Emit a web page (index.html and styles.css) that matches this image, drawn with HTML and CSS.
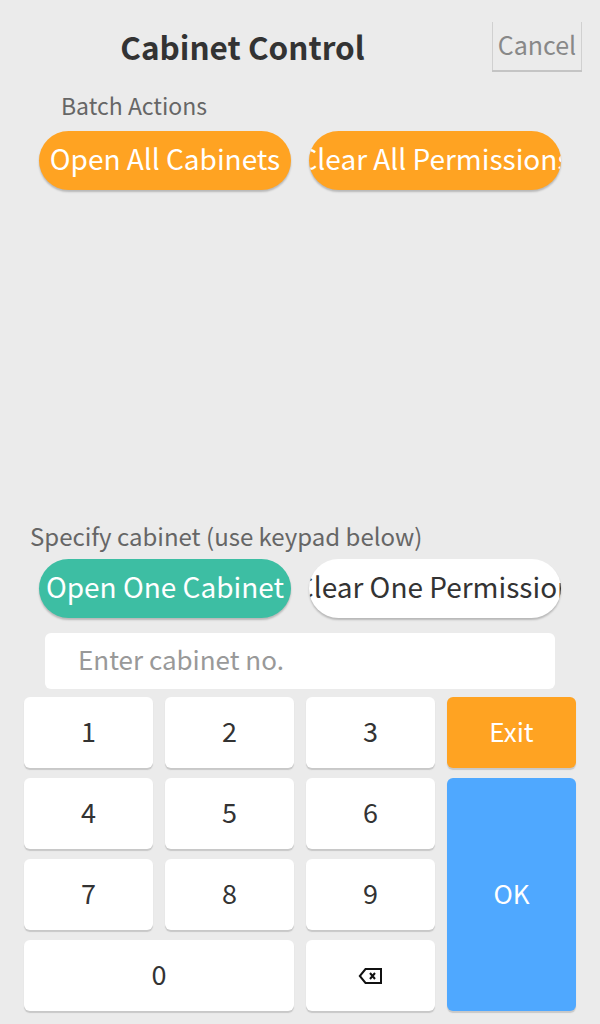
FILE: index.html
```html
<!DOCTYPE html>
<html>
<head>
<meta charset="utf-8">
<link rel="stylesheet" href="styles.css">
</head>
<body>
<div class="page">
  <header class="header">
    <h1 class="title">Cabinet Control</h1>
    <button class="cancel">Cancel</button>
  </header>

  <section class="batch">
    <div class="label batch-label">Batch Actions</div>
    <div class="pill-row">
      <button class="pill orange">Open All Cabinets</button>
      <button class="pill orange">Clear All Permissions</button>
    </div>
  </section>

  <section class="single">
    <div class="label single-label">Specify cabinet (use keypad below)</div>
    <div class="pill-row">
      <button class="pill teal">Open One Cabinet</button>
      <button class="pill white">Clear One Permission</button>
    </div>
    <div class="input">Enter cabinet no.</div>
  </section>

  <div class="keypad">
    <button class="key">1</button>
    <button class="key">2</button>
    <button class="key">3</button>
    <button class="key exit">Exit</button>
    <button class="key">4</button>
    <button class="key">5</button>
    <button class="key">6</button>
    <button class="key ok">OK</button>
    <button class="key">7</button>
    <button class="key">8</button>
    <button class="key">9</button>
    <button class="key zero">0</button>
    <button class="key back" aria-label="backspace">
      <svg width="25" height="18" viewBox="0 0 25 18"><path d="M7.5 2 H23 V16 H7.5 L1.8 9 Z" fill="none" stroke="#111" stroke-width="2" stroke-linejoin="miter"/><path d="M12 6 L17 12 M17 6 L12 12" stroke="#111" stroke-width="2"/></svg>
    </button>
  </div>
</div>
</body>
</html>
```

FILE: styles.css
```css
* { box-sizing: border-box; }
html, body {
  margin: 0;
  padding: 0;
  background: #ebebeb;
}
body {
  font-family: "Noto Sans CJK SC", "Noto Sans", sans-serif;
  width: 600px;
  height: 1024px;
  overflow: hidden;
}
button {
  font-family: inherit;
  border: none;
  padding: 0;
  cursor: pointer;
}
.page {
  display: flex;
  flex-direction: column;
  height: 1024px;
}
.header {
  display: flex;
  align-items: flex-start;
  padding: 22px 18px 0 0;
  height: 92px;
}
.title {
  flex: 1;
  margin: 0;
  text-align: center;
  font-size: 31.5px;
  font-weight: 700;
  color: #333;
  line-height: 48px;
  margin-right: 7px;
}
.cancel {
  width: 90px;
  height: 48px;
  background: #ebebeb;
  border-left: 1px solid #d0d0d0;
  border-right: 1px solid #d0d0d0;
  box-shadow: 0 2px 0 #c4c4c4;
  color: #888;
  font-size: 25px;
  line-height: 44px;
  padding-bottom: 4px;
}
.label {
  color: #666;
  line-height: 28px;
}
.batch-label {
  font-size: 23px;
  padding-left: 61px;
  margin-top: -1px;
  margin-bottom: 12px;
}
.pill-row {
  display: flex;
  gap: 18px;
  padding-left: 39px;
}
.pill {
  width: 252px;
  height: 59px;
  border-radius: 30px;
  font-size: 28px;
  color: #fff;
  white-space: nowrap;
  overflow: hidden;
  display: flex;
  justify-content: center;
  align-items: center;
  padding-bottom: 5px;
  box-shadow: 0 2px 2px rgba(0,0,0,0.22);
}
.orange { background: #ffa322; }
.teal { background: #3dbea3; }
.white { background: #fff; color: #333; }
.single {
  margin-top: auto;
}
.single-label {
  font-size: 24px;
  padding-left: 30px;
  margin-bottom: 9px;
}
.input {
  margin: 15px 45px 0 45px;
  height: 56px;
  background: #fff;
  border-radius: 6px;
  color: #999;
  font-size: 26px;
  line-height: 52px;
  padding-left: 33px;
}
.keypad {
  display: grid;
  grid-template-columns: repeat(4, 129px);
  grid-auto-rows: 71px;
  column-gap: 12px;
  row-gap: 10px;
  padding: 8px 24px 13px 24px;
}
.key {
  background: #fff;
  border-radius: 6px;
  box-shadow: 0 2px 1px #c8c8c8;
  font-size: 27px;
  color: #333;
  display: flex;
  align-items: center;
  justify-content: center;
  padding-bottom: 5px;
}
.back {
  padding-bottom: 0;
}
.exit {
  background: #ffa322;
  color: #fff;
  font-size: 26px;
}
.ok {
  background: #4fa8ff;
  color: #fff;
  font-size: 26px;
  grid-row: span 3;
}
.zero {
  grid-column: span 2;
}
```
